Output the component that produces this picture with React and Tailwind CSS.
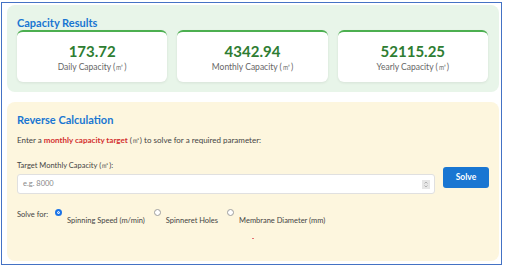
import React from 'react'

const cards = [
  { value: '173.72', label: 'Daily Capacity (㎡)' },
  { value: '4342.94', label: 'Monthly Capacity (㎡)' },
  { value: '52115.25', label: 'Yearly Capacity (㎡)' },
]

function Radio({ checked }) {
  return (
    <span
      className={
        checked
          ? 'h-[7px] w-[7px] shrink-0 rounded-full border-[2px] border-[#1a73e8] bg-[#1a73e8] shadow-[inset_0_0_0_1px_#fff]'
          : 'h-[7px] w-[7px] shrink-0 rounded-full border border-[#9e9e9e] bg-white'
      }
    />
  )
}

export default function App() {
  return (
    <div className="h-[267px] w-[506px] bg-white" style={{ fontFamily: 'Lato, "Open Sans", sans-serif' }}>
      <div className="ml-[1px] mt-[2px] h-[263px] w-[501px] overflow-hidden border border-[#4472c4] pl-[5px] pt-[2px]">
        {/* RESULTS */}
        <div className="w-[492px] rounded-[8px] bg-[#e8f5e9] px-[10px] pt-[11px] pb-[10px]">
          <h3 className="text-[11px] leading-[14px] font-bold text-[#1976d2]">Capacity Results</h3>
          <div className="grid grid-cols-3 gap-[10px] pr-[1px]">
            {cards.map((c) => (
              <div
                key={c.label}
                className="flex h-[52px] flex-col items-center justify-center rounded-[6px] border-t-2 border-[#4caf50] bg-white shadow-[0_1px_3px_rgba(0,0,0,0.08)]"
              >
                <div className="text-[15px] leading-[18px] font-bold text-[#2e7d32]">{c.value}</div>
                <div className="mt-[2px] text-[8.5px] leading-[10px] text-[#666]">{c.label}</div>
              </div>
            ))}
          </div>
        </div>

        {/* REVERSE */}
        <div className="mt-[10px] h-[159px] w-[492px] rounded-[8px] bg-[#fdf6de] px-[10px] pt-[11px]">
          <h3 className="text-[11px] leading-[14px] font-bold text-[#1976d2]">Reverse Calculation</h3>
          <p className="mt-[8px] text-[8px] leading-[11px] text-[#444]">
            Enter a <b className="text-[#d32f2f]">monthly capacity target</b> (㎡) to solve for a required parameter:
          </p>

          <div className="mt-[15px] flex items-end gap-[8px]">
            <div className="w-[418px]">
              <div className="text-[7.5px] leading-[10px] text-[#444]">Target Monthly Capacity (㎡):</div>
              <div className="mt-[3px] flex h-[20px] items-center justify-between rounded-[3px] border border-[#e0e0e0] bg-white pl-[5px] pr-[4px]">
                <span className="text-[7.5px] text-[#888]">e.g. 8000</span>
                <svg width="8" height="9" viewBox="0 0 8 9" className="bg-[#e6e6e6]">
                  <path d="M2.5 3.5 L4 2 L5.5 3.5" fill="none" stroke="#999" strokeWidth="0.7" />
                  <path d="M2.5 5.5 L4 7 L5.5 5.5" fill="none" stroke="#999" strokeWidth="0.7" />
                </svg>
              </div>
            </div>
            <button className="mb-[6px] h-[21px] w-[46px] rounded-[3px] bg-[#1976d2] text-[8.5px] font-bold text-white">Solve</button>
          </div>

          <div className="mt-[15px] flex items-start text-[7.5px] leading-[10px] text-[#444]">
            <span className="mr-[7px] mt-[1px]">Solve for:</span>
            <label className="flex items-start gap-[5px]">
              <Radio checked />
              <span className="mt-[7px]">Spinning Speed (m/min)</span>
            </label>
            <label className="ml-[9px] flex items-start gap-[5px]">
              <Radio />
              <span className="mt-[7px]">Spinneret Holes</span>
            </label>
            <label className="ml-[9px] flex items-start gap-[5px]">
              <Radio />
              <span className="mt-[7px]">Membrane Diameter (mm)</span>
            </label>
          </div>

          <div className="mt-[12px] flex justify-center">
            <span className="h-[1px] w-[2px] bg-[#e57373]" />
          </div>
        </div>
      </div>
    </div>
  )
}
